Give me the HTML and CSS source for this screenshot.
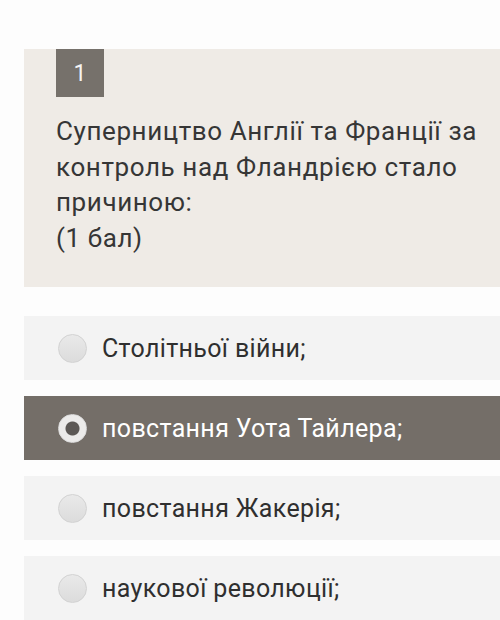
FILE: index.html
```html
<!DOCTYPE html>
<html lang="uk">
<head>
<meta charset="utf-8">
<link rel="stylesheet" href="styles.css">
</head>
<body>
<div class="page">
  <section class="question">
    <div class="num">1</div>
    <p class="qtext">Суперництво Англії та Франції за контроль над Фландрією стало причиною:<br>(1 бал)</p>
  </section>
  <ul class="options">
    <li class="option"><span class="radio"></span><span class="label">Столітньої війни;</span></li>
    <li class="option selected"><span class="radio"></span><span class="label">повстання Уота Тайлера;</span></li>
    <li class="option"><span class="radio"></span><span class="label">повстання Жакерія;</span></li>
    <li class="option"><span class="radio"></span><span class="label">наукової революції;</span></li>
  </ul>
</div>
</body>
</html>
```
FILE: styles.css
```css
html, body {
  margin: 0;
  padding: 0;
  background: #fdfdfd;
  font-family: Roboto, "Noto Sans", sans-serif;
  overflow: hidden;
}
.page {
  padding: 49px 0 0 24px;
}
.question {
  background: #efebe6;
  padding: 0 0 0 32px;
  height: 238px;
  box-sizing: border-box;
}
.num {
  width: 48px;
  height: 48px;
  background: #76716b;
  color: #f4f4f4;
  font-size: 23px;
  display: flex;
  align-items: center;
  justify-content: center;
}
.qtext {
  margin: 0;
  padding-top: 17px;
  font-size: 26px;
  letter-spacing: 0.6px;
  line-height: 35.5px;
  color: #363636;
  padding-right: 10px;
}
.options {
  list-style: none;
  margin: 29px 0 0;
  padding: 0;
  display: flex;
  flex-direction: column;
  gap: 16px;
}
.option {
  height: 64px;
  background: #f3f3f3;
  display: flex;
  align-items: center;
  padding-left: 34px;
  gap: 15px;
}
.radio {
  width: 29px;
  height: 29px;
  border-radius: 50%;
  box-sizing: border-box;
  background: linear-gradient(#e9e9e9, #dcdcdc);
  border: 1px solid #d2d2d2;
  flex: none;
}
.label {
  font-size: 25px;
  letter-spacing: 0.35px;
  color: #2f2f2f;
}
.option.selected {
  background: #746e68;
}
.option.selected .label {
  color: #fff;
}
.option.selected .radio {
  background: radial-gradient(circle, #5c5855 0 6.5px, #ecebea 7.5px);
  border: 1px solid #ddd;
}
```
